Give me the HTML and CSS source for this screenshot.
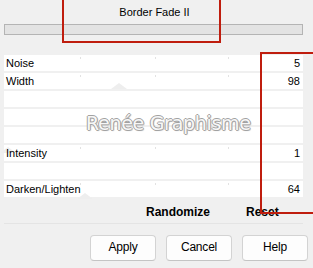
FILE: index.html
```html
<!DOCTYPE html>
<html>
<head>
<meta charset="UTF-8">
<title>Border Fade II</title>
<link rel="stylesheet" href="styles.css">
</head>
<body>
<div class="dialog">
	<div class="title">Border Fade II</div>
	<div class="preview-bar"></div>

	<div class="panel">
		<div class="rows">
			<div class="row ticks"><span class="label">Noise</span><span class="value">5</span></div>
			<div class="row ticks"><span class="label">Width</span><span class="value">98</span><i class="thumb thumb-width"></i></div>
			<div class="row"></div>
			<div class="row"></div>
			<div class="row"></div>
			<div class="row ticks"><span class="label">Intensity</span><span class="value">1</span><i class="thumb thumb-left"></i></div>
			<div class="row"></div>
			<div class="row ticks"><span class="label">Darken/Lighten</span><span class="value">64</span><i class="thumb thumb-dark"></i></div>
		</div>
		<div class="actions">
			<span class="act act-random">Randomize</span>
			<span class="act">Reset</span>
		</div>
	</div>

	<div class="buttons">
		<div class="btn">Apply</div>
		<div class="btn">Cancel</div>
		<div class="btn">Help</div>
	</div>

	<!-- overlays drawn on top of the dialog -->
	<div class="watermark">Renée Graphisme</div>
	<div class="mark mark-title"></div>
	<div class="mark mark-values"></div>
</div>
</body>
</html>
```

FILE: styles.css
```css
body { margin: 0; background: #f0f0f0; font-family: "Liberation Sans", Arial, sans-serif; color: #000; }

.dialog { position: relative; width: 313px; height: 268px; overflow: hidden; }

.title { height: 24px; line-height: 24px; font-size: 11px; text-align: center; padding-right: 4px; box-sizing: border-box; }

.preview-bar { margin: 0 10px 0 4px; height: 11px; box-sizing: border-box; border: 1px solid #b4b4b4; background: #e3e3e3; }

.panel { margin: 20px 10px 0 4px; }

.rows { display: flex; flex-direction: column; gap: 2px; }
.row { position: relative; height: 16px; background: #ffffff; display: flex; justify-content: space-between; align-items: center; font-size: 11px; padding: 0 3px 0 2px; }
.row.ticks { background-image: linear-gradient(#e2e2e2, #e2e2e2), linear-gradient(#e2e2e2, #e2e2e2), linear-gradient(#e2e2e2, #e2e2e2);
	background-size: 1px 2px; background-repeat: no-repeat; background-position: 76px 2px, 151px 2px, 224px 2px; }
.label { position: relative; z-index: 1; }
.value { position: relative; z-index: 1; }

.thumb { position: absolute; bottom: 0; width: 0; height: 0; border-left: 8px solid transparent; border-right: 8px solid transparent; border-bottom: 6px solid #eeeeee; }
.thumb-width { left: 107px; }
.thumb-left { left: -4px; top: 2px; bottom: auto; }
.thumb-dark { left: 73px; bottom: -2px; }

.actions { height: 27px; display: flex; align-items: center; font-weight: bold; font-size: 12px; padding-left: 142px; padding-top: 3px; box-sizing: border-box; border-bottom: 1px solid #e4e4e4; margin-bottom: 5px; }
.act-random { width: 100px; }

.buttons { display: flex; justify-content: flex-end; gap: 10px; padding: 6px 5px 0 0; }
.btn { width: 66px; height: 26px; box-sizing: border-box; background: #fdfdfd; border: 1px solid #d3d3d3; border-bottom-color: #c4c4c4; border-radius: 4px;
	font-size: 12px; text-align: center; line-height: 23px; letter-spacing: -0.2px; }

.watermark { position: absolute; left: 86px; top: 112px; font-family: "DejaVu Sans", Verdana, sans-serif; font-size: 19px; letter-spacing: -0.3px; color: #f7f7f7;
	text-shadow: 1px 0 0 #a2a2a2, -1px 0 0 #a2a2a2, 0 1px 0 #a2a2a2, 0 -1px 0 #a2a2a2, 1px 1px 1px #bcbcbc; }

.mark { position: absolute; border: 2px solid #bf1d0e; box-sizing: border-box; }
.mark-title { left: 62px; top: -10px; width: 159px; height: 53px; }
.mark-values { left: 260px; top: 52px; width: 70px; height: 162px; }
```
